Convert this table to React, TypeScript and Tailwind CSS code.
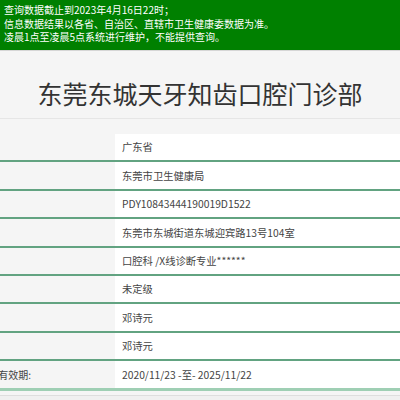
const rows: { label?: string; value: string }[] = [
  { value: "广东省" },
  { value: "东莞市卫生健康局" },
  { value: "PDY10843444190019D1522" },
  { value: "东莞市东城街道东城迎宾路13号104室" },
  { value: "口腔科 /X线诊断专业******" },
  { value: "未定级" },
  { value: "邓诗元" },
  { value: "邓诗元" },
  { label: "执业许可证有效期:", value: "2020/11/23 -至- 2025/11/22" },
];

const font = { fontFamily: '"Noto Sans CJK SC", "Liberation Sans", sans-serif' };

export default function App() {
  return (
    <div className="w-[400px] h-[400px] overflow-hidden bg-[#f5f5f5]" style={font}>
      <div className="bg-[#008000] border-b border-[#d6d6d6] h-[51px] pl-[4px] pt-[3px] text-[10px] leading-[13.5px] text-white">
        <p>查询数据截止到2023年4月16日22时；</p>
        <p>信息数据结果以各省、自治区、直辖市卫生健康委数据为准。</p>
        <p>凌晨1点至凌晨5点系统进行维护，不能提供查询。</p>
      </div>

      <div className="pt-[25px] pb-[8px] border-b border-[#e6e6e6] text-center">
        <h1 className="text-[25px] leading-[34px] text-[#333]">东莞东城天牙知齿口腔门诊部</h1>
      </div>

      <div className="mt-[15px]">
        {rows.map((row, i) => (
          <div
            key={i}
            className={
              i === rows.length - 1
                ? "flex h-[29.4px] border-b-[3px] border-[#9fcfb4]"
                : "flex h-[28.4px] border-b-2 border-[#62a381]"
            }
          >
            <div className="w-[115px] shrink-0 flex items-center justify-end overflow-hidden whitespace-nowrap pr-[84px] text-[10px] text-[#444]">
              {row.label}
            </div>
            <div className="flex-1 bg-white flex items-center pl-[7px] text-[10.3px] text-[#444] whitespace-nowrap">
              {row.value}
            </div>
          </div>
        ))}
      </div>

      <div className="mt-[4px] border-t border-[#dedede] h-[10px] bg-[#f0f0f0]" />
    </div>
  );
}
